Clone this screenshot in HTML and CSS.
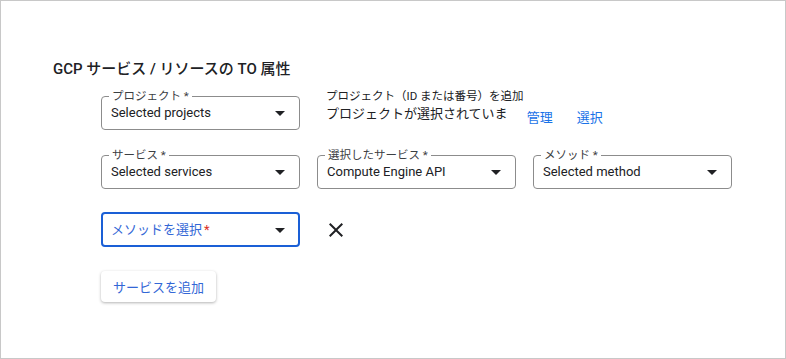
FILE: index.html
```html
<!DOCTYPE html>
<html lang="ja">
<head>
  <meta charset="UTF-8">
  <meta name="viewport" content="width=device-width, initial-scale=1.0">
  <title>TO 属性</title>
  <link rel="stylesheet" href="styles.css">
</head>
<body>
  <div class="frame">
    <h3 class="title">GCP サービス / リソースの TO 属性</h3>

    <div class="form">
      <!-- プロジェクト -->
      <div class="row">
        <div class="field">
          <span class="field-label">プロジェクト *</span>
          <span class="field-value">Selected projects</span>
          <svg class="arrow" viewBox="0 0 24 24"><path d="M7 10l5 5 5-5z"/></svg>
        </div>
        <div class="project-info">
          <div class="hint">プロジェクト（ID または番号）を追加</div>
          <div class="status">
            <span class="status-text">プロジェクトが選択されていま</span>
            <a class="link first" href="javascript:;">管理</a>
            <a class="link" href="javascript:;">選択</a>
          </div>
        </div>
      </div>

      <!-- サービス -->
      <div class="row">
        <div class="field">
          <span class="field-label">サービス *</span>
          <span class="field-value">Selected services</span>
          <svg class="arrow" viewBox="0 0 24 24"><path d="M7 10l5 5 5-5z"/></svg>
        </div>
        <div class="field">
          <span class="field-label">選択したサービス *</span>
          <span class="field-value">Compute Engine API</span>
          <svg class="arrow" viewBox="0 0 24 24"><path d="M7 10l5 5 5-5z"/></svg>
        </div>
        <div class="field">
          <span class="field-label">メソッド *</span>
          <span class="field-value">Selected method</span>
          <svg class="arrow" viewBox="0 0 24 24"><path d="M7 10l5 5 5-5z"/></svg>
        </div>
      </div>

      <!-- メソッド -->
      <div class="row row-method">
        <div class="field focused">
          <span class="field-value placeholder">メソッドを選択<span class="req">*</span></span>
          <svg class="arrow" viewBox="0 0 24 24"><path d="M7 10l5 5 5-5z"/></svg>
        </div>
        <svg class="close" viewBox="0 0 24 24"><path d="M19 6.41L17.59 5 12 10.59 6.41 5 5 6.41 10.59 12 5 17.59 6.41 19 12 13.41 17.59 19 19 17.59 13.41 12z"/></svg>
      </div>

      <button class="add-btn" type="button">サービスを追加</button>
    </div>
  </div>
</body>
</html>
```

FILE: styles.css
```css
:root {
  --primary: #1a73e8;
  --focus: #1a5fd6;
  --text: #202124;
  --sub: #3c4043;
  --outline: #8c8c8c;
  --frame: #c8c8c8;
}
*, *::before, *::after {
  box-sizing: border-box;
}
body, h3 {
  margin: 0;
  padding: 0;
}
body {
  font-family: Roboto, "Noto Sans CJK JP", sans-serif;
  color: var(--text);
  background: #fff;
}
.frame {
  width: 786px;
  height: 359px;
  border: 1px solid var(--frame);
  padding: 58px 0 0 52px;
}
.title {
  font-size: 15px;
  line-height: 20px;
  font-weight: 500;
}
.form {
  margin: 17px 0 0 48px;
  display: flex;
  flex-direction: column;
  gap: 25px;
}
.row {
  display: flex;
  align-items: flex-start;
  gap: 17px;
}
.row-method {
  margin-top: -2px;
}
.field {
  position: relative;
  width: 199px;
  height: 34px;
  border: 1px solid var(--outline);
  border-radius: 4px;
  display: flex;
  align-items: center;
  padding: 0 7px 0 9px;
}
.field-label {
  position: absolute;
  top: -8px;
  left: 7px;
  padding: 0 3px;
  background: #fff;
  font-size: 11.5px;
  line-height: 14px;
  color: var(--sub);
}
.field-value {
  flex: 1;
  font-size: 13px;
  line-height: 20px;
}
.arrow {
  width: 24px;
  height: 24px;
  fill: var(--text);
}
.field.focused {
  height: 35px;
  border: 2px solid var(--focus);
  padding: 0 6px 0 8px;
}
.placeholder {
  color: #3367d6;
}
.req {
  color: #d93025;
  margin-left: 2px;
}
.project-info {
  margin: -8px 0 0 9px;
}
.hint {
  font-size: 11.5px;
  line-height: 16px;
}
.status {
  display: flex;
  align-items: flex-start;
  font-size: 13px;
  line-height: 20px;
}
.link {
  color: var(--primary);
  text-decoration: none;
  padding: 0 12px;
  margin-top: 4px;
}
.link.first {
  margin-left: 7px;
}
.close {
  width: 24px;
  height: 24px;
  margin: 6px 0 0 7px;
  fill: var(--text);
}
.add-btn {
  align-self: flex-start;
  height: 31px;
  margin-top: -1px;
  padding: 0 12px;
  border: none;
  border-radius: 4px;
  background: #fff;
  box-shadow: 0 1px 3px rgba(0,0,0,0.3);
  font-family: inherit;
  font-size: 13px;
  color: #3367d6;
}
```
